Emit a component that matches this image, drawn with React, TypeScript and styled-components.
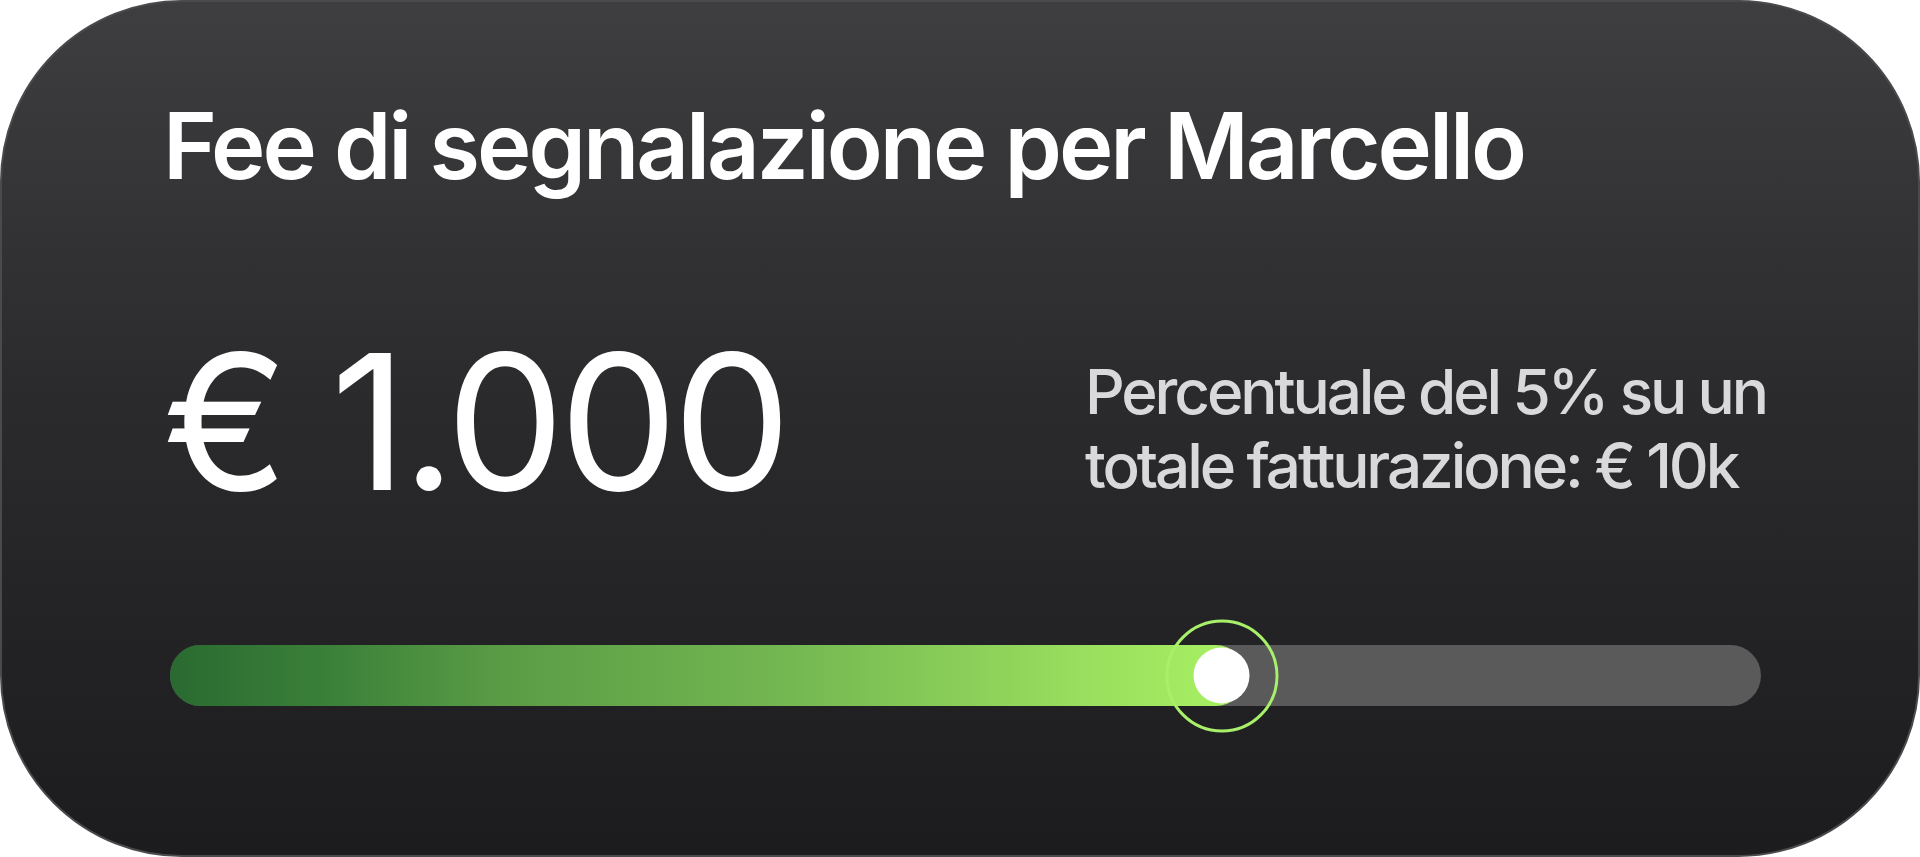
import React from 'react'
import styled, { createGlobalStyle } from 'styled-components'

const GlobalStyle = createGlobalStyle`
    html, body {
        margin: 0;
        padding: 0;
        background: #ffffff;
    }
    * {
        box-sizing: border-box;
    }
`

type TypePropsFeeSlider = {
    value: number
}

const FeeSlider: React.FC<TypePropsFeeSlider> = (props) => {

    const { value } = props

    return (
        <SliderTrack>
            <SliderFill style={{ width: `calc(${value}% + 24px)` }} />
            <SliderThumb style={{ left: `${value}%` }}>
                <ThumbRing />
                <ThumbKnob />
            </SliderThumb>
        </SliderTrack>
    )
}

export default function App() {
    const percent = 66.1

    return (
        <>
            <GlobalStyle />
            <CardWrapper>
                <CardTitle>Fee di segnalazione per Marcello</CardTitle>
                <CardRow>
                    <Amount>€ 1.000</Amount>
                    <Note>
                        Percentuale del 5% su un
                        <br />
                        totale fatturazione: € 10k
                    </Note>
                </CardRow>
                <FeeSlider value={percent} />
            </CardWrapper>
        </>
    )
}

const CardWrapper = styled.section`
    width: 1920px;
    height: 857px;
    border: 2px solid #4a494c;
    border-radius: 182px;
    background: linear-gradient(180deg, #3e3d40 0%, #2b2b2e 45%, #1c1c1e 100%);
    padding: 98px 152px 0 161px;
    display: flex;
    flex-direction: column;
    font-family: Inter, 'Noto Sans', sans-serif;
    color: #ffffff;
    overflow: hidden;
`
const CardTitle = styled.h1`
    margin: 0;
    font-size: 92px;
    line-height: 92px;
    font-weight: 600;
    letter-spacing: -0.033em;
`
const CardRow = styled.div`
    display: flex;
    align-items: flex-start;
    justify-content: space-between;
    margin-top: 136px;
`
const Amount = styled.div`
    font-size: 188px;
    line-height: 188px;
    font-weight: 400;
    letter-spacing: -0.028em;
`
const Note = styled.p`
    margin: 27px 0 0 0;
    font-size: 62px;
    line-height: 74px;
    font-weight: 450;
    letter-spacing: -0.05em;
    color: #d9d9db;
`
const SliderTrack = styled.div`
    position: relative;
    height: 61px;
    margin: 129px 5px 0 7px;
    border-radius: 31px;
    background: #5a5a5b;
`
const SliderFill = styled.div`
    height: 100%;
    border-radius: 31px;
    background: linear-gradient(90deg, #2a6a31 0%, #3a7f39 14%, #5a9c45 31%, #74b852 58%, #9be05e 86%, #a8f263 100%);
`
const SliderThumb = styled.div`
    position: absolute;
    top: 50%;
    width: 113px;
    height: 113px;
    transform: translate(-50%, -50%);
    display: flex;
    align-items: center;
    justify-content: center;
`
const ThumbRing = styled.div`
    position: absolute;
    inset: 0;
    border-radius: 50%;
    border: 3.5px solid #a8f06a;
`
const ThumbKnob = styled.div`
    position: relative;
    width: 56px;
    height: 56px;
    border-radius: 50%;
    background: #ffffff;
`
